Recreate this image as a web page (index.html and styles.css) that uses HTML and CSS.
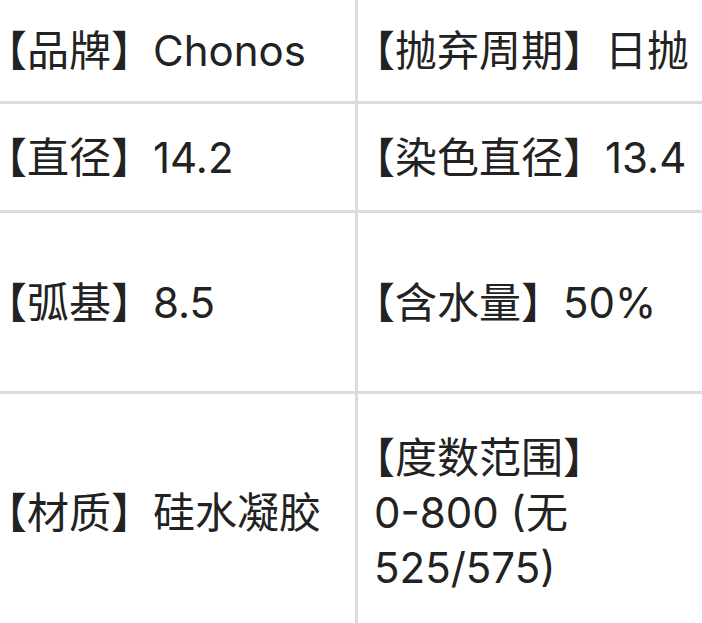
FILE: index.html
```html
<!DOCTYPE html>
<html lang="zh-CN">
<head>
<meta charset="utf-8">
<title>商品参数</title>
<link rel="stylesheet" href="styles.css">
</head>
<body>
<div class="spec">
  <div class="row r1">
    <div class="cell left">【品牌】Chonos</div>
    <div class="cell right">【抛弃周期】日抛</div>
  </div>
  <div class="row r2">
    <div class="cell left">【直径】14.2</div>
    <div class="cell right">【染色直径】13.4</div>
  </div>
  <div class="row r3">
    <div class="cell left">【弧基】8.5</div>
    <div class="cell right">【含水量】50%</div>
  </div>
  <div class="row r4">
    <div class="cell left">【材质】硅水凝胶</div>
    <div class="cell right">【度数范围】<br>0-800 (无<br>525/575)</div>
  </div>
</div>
</body>
</html>
```

FILE: styles.css
```css
html, body {
  margin: 0;
  padding: 0;
  background: #ffffff;
  overflow: hidden;
}

.spec {
  width: 702px;
  font-family: Inter, "Noto Sans CJK SC", sans-serif;
  font-size: 42px;
  color: #222222;
  text-spacing-trim: trim-start;
}

.row {
  display: grid;
  grid-template-columns: 358px 1fr;
  border-bottom: 3px solid #dcdcdc;
}

.r1 { height: 101px; }
.r2 { height: 106px; }
.r3 { height: 178px; }
.r4 { height: 236px; border-bottom: none; }

.cell {
  display: flex;
  align-items: center;
  line-height: 55px;
  white-space: nowrap;
}

.left {
  border-right: 3px solid #dcdcdc;
  padding-left: 6px;
}

.right {
  padding-left: 16px;
}
```
